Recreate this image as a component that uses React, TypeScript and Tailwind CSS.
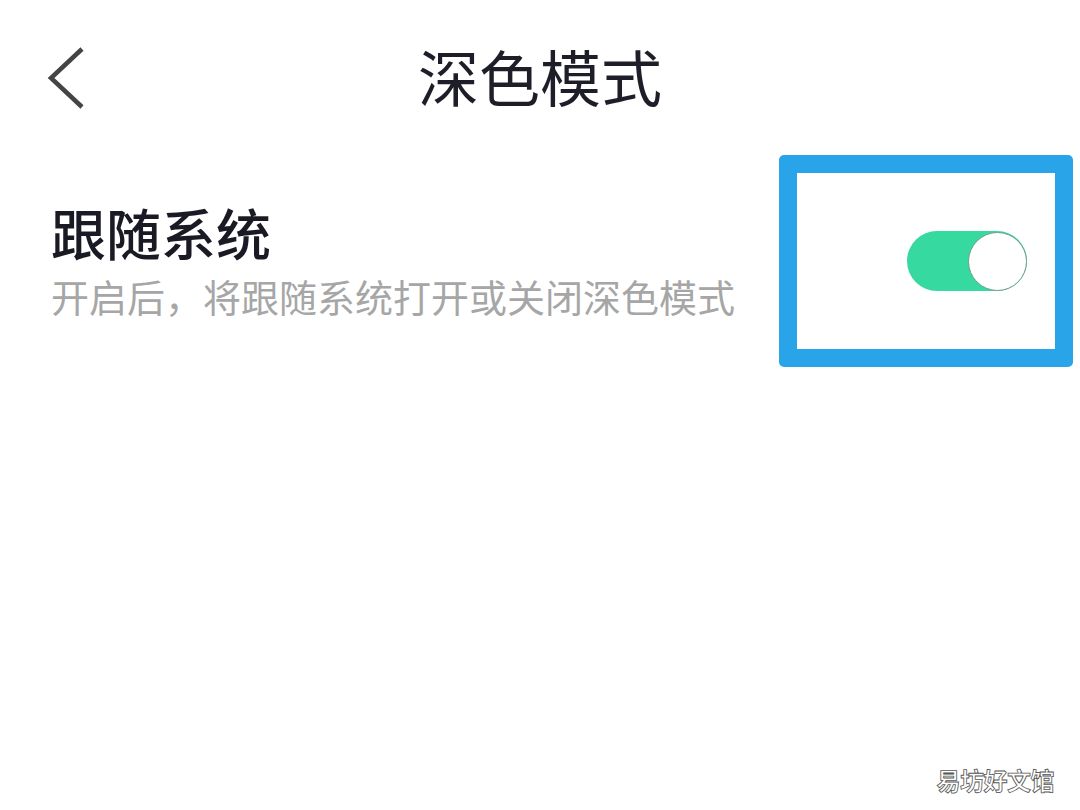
import React from "react";

export default function App() {
  return (
    <div
      className="relative w-[1080px] h-[810px] bg-white overflow-hidden"
      style={{ fontFamily: '"Noto Sans CJK SC", "Noto Sans", sans-serif' }}
    >
      <div className="grid grid-cols-[1fr_auto_1fr] items-center h-[155px]">
        <div className="pl-[46px] flex items-center">
          <svg width="40" height="64" viewBox="0 0 40 64" fill="none">
            <polyline
              points="36,3 5,32 36,61"
              stroke="#444444"
              strokeWidth="4.5"
              strokeLinecap="butt"
              strokeLinejoin="miter"
            />
          </svg>
        </div>
        <div className="text-[61px] leading-none text-[#1e1e28] font-normal -mt-[4px]">深色模式</div>
        <div />
      </div>
      <div className="flex justify-between items-start">
        <div className="pl-[51px] pt-[49px] flex flex-col">
          <div className="text-[55px] leading-none text-[#1a1a24] font-medium">跟随系统</div>
          <div className="mt-[18px] text-[38px] leading-none text-[#a6a6a6]">
            开启后，将跟随系统打开或关闭深色模式
          </div>
        </div>
        <div className="mr-[7px] w-[294px] h-[212px] border-[18px] border-[#29a4e9] rounded-[5px] flex items-center justify-end pr-[28px]">
          <div className="w-[120px] h-[60px] rounded-full bg-[#36d9a0] flex items-center justify-end">
            <div className="w-[59px] h-[59px] rounded-full bg-white border border-[#6f9f86]" />
          </div>
        </div>
      </div>
      <div className="absolute right-[26px] bottom-[18px] text-[24px] leading-none text-white [-webkit-text-stroke:0.8px_#555555] font-bold tracking-[-0.5px]">
        易坊好文馆
      </div>
    </div>
  );
}
